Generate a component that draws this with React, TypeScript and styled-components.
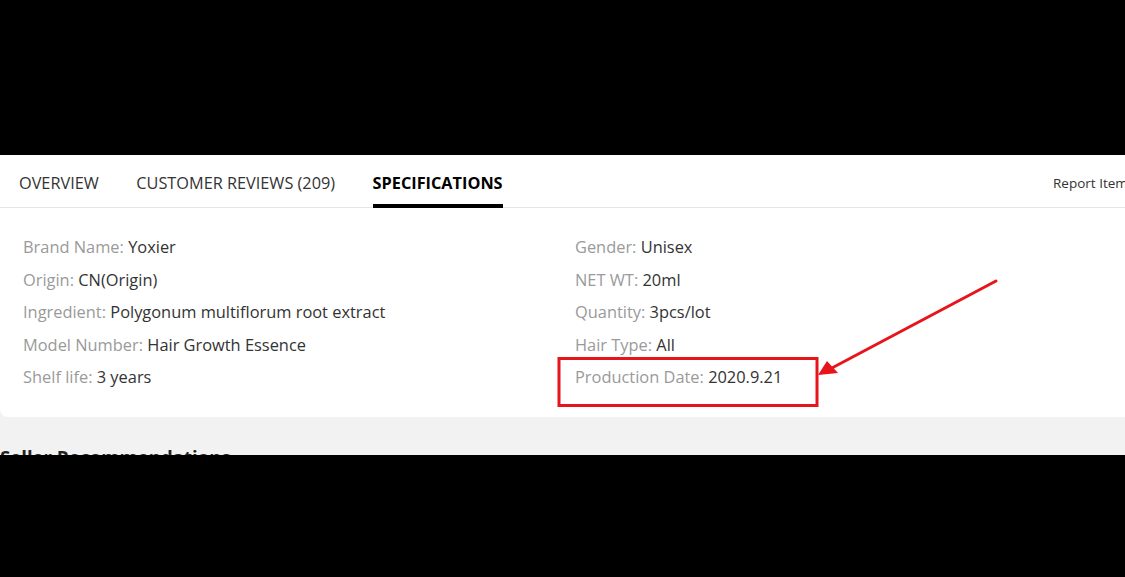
import React from "react";
import styled, { createGlobalStyle } from "styled-components";

const Global = createGlobalStyle`
  html, body { margin: 0; padding: 0; background: #000; }
  body { font-family: "Open Sans", "Noto Sans", sans-serif; }
`;

const Stage = styled.div`
  width: 1125px;
  height: 577px;
  background: #000;
  display: flex;
  flex-direction: column;
  padding-top: 155px;
  box-sizing: border-box;
  overflow: hidden;
`;

const Screen = styled.div`
  position: relative;
  height: 300px;
  background: #f2f2f2;
  overflow: hidden;
`;

const Card = styled.section`
  width: 1160px;
  background: #fff;
  border-radius: 0 0 8px 8px;
  padding-bottom: 23px;
`;

const TabBar = styled.nav`
  height: 52px;
  display: flex;
  align-items: flex-start;
  border-bottom: 1px solid #e6e6e6;
  padding: 0 0 0 19px;
  gap: 37.5px;
`;

const Tab = styled.div<{ $active?: boolean }>`
  position: relative;
  height: 52px;
  padding-top: 17px;
  box-sizing: border-box;
  font-size: 16.3px;
  line-height: 22px;
  text-transform: uppercase;
  color: ${(p) => (p.$active ? "#000" : "#333")};
  font-weight: ${(p) => (p.$active ? 700 : 400)};
  &::after {
    content: "";
    display: ${(p) => (p.$active ? "block" : "none")};
    position: absolute;
    left: 0;
    right: 0;
    bottom: -1px;
    height: 4px;
    background: #000;
  }
`;

const ReportLink = styled.div`
  margin-left: auto;
  padding-top: 18px;
  font-size: 13.5px;
  line-height: 20px;
  color: #333;
  width: 107px;
`;

const SpecGrid = styled.ul`
  list-style: none;
  margin: 0;
  padding: 23px 0 0 23px;
  display: grid;
  grid-template-columns: 552px 552px;
  grid-auto-flow: column;
  grid-template-rows: repeat(5, 32.5px);
`;

const SpecItem = styled.li`
  font-size: 16.4px;
  line-height: 32.5px;
  color: #333;
  white-space: nowrap;
`;

const Label = styled.span`
  color: #9a9a9a;
`;

const SectionTitle = styled.h2`
  margin: 27px 0 0 0;
  font-size: 18.6px;
  font-weight: 700;
  color: #222;
  line-height: 26px;
`;

const Annotation = styled.svg`
  position: absolute;
  left: 0;
  top: 0;
  pointer-events: none;
`;

const specs: [string, string][] = [
  ["Brand Name", "Yoxier"],
  ["Origin", "CN(Origin)"],
  ["Ingredient", "Polygonum multiflorum root extract"],
  ["Model Number", "Hair Growth Essence"],
  ["Shelf life", "3 years"],
  ["Gender", "Unisex"],
  ["NET WT", "20ml"],
  ["Quantity", "3pcs/lot"],
  ["Hair Type", "All"],
  ["Production Date", "2020.9.21"],
];

export default function App() {
  return (
    <>
      <Global />
      <Stage>
        <Screen>
          <Card>
            <TabBar>
              <Tab>Overview</Tab>
              <Tab>Customer Reviews (209)</Tab>
              <Tab $active>Specifications</Tab>
              <ReportLink>Report Item</ReportLink>
            </TabBar>
            <SpecGrid>
              {specs.map(([k, v]) => (
                <SpecItem key={k}>
                  <Label>{k}:</Label> {v}
                </SpecItem>
              ))}
            </SpecGrid>
          </Card>
          <SectionTitle>Seller Recommendations</SectionTitle>
          <Annotation width="1125" height="300" viewBox="0 0 1125 300">
            <rect x="559" y="203.5" width="258" height="47" fill="none" stroke="#e8141c" strokeWidth="3" />
            <line x1="996" y1="126" x2="830" y2="214" stroke="#e8141c" strokeWidth="3" strokeLinecap="round" />
            <polygon points="818,220 827,206 838,218" fill="#e8141c" />
          </Annotation>
        </Screen>
      </Stage>
    </>
  );
}
